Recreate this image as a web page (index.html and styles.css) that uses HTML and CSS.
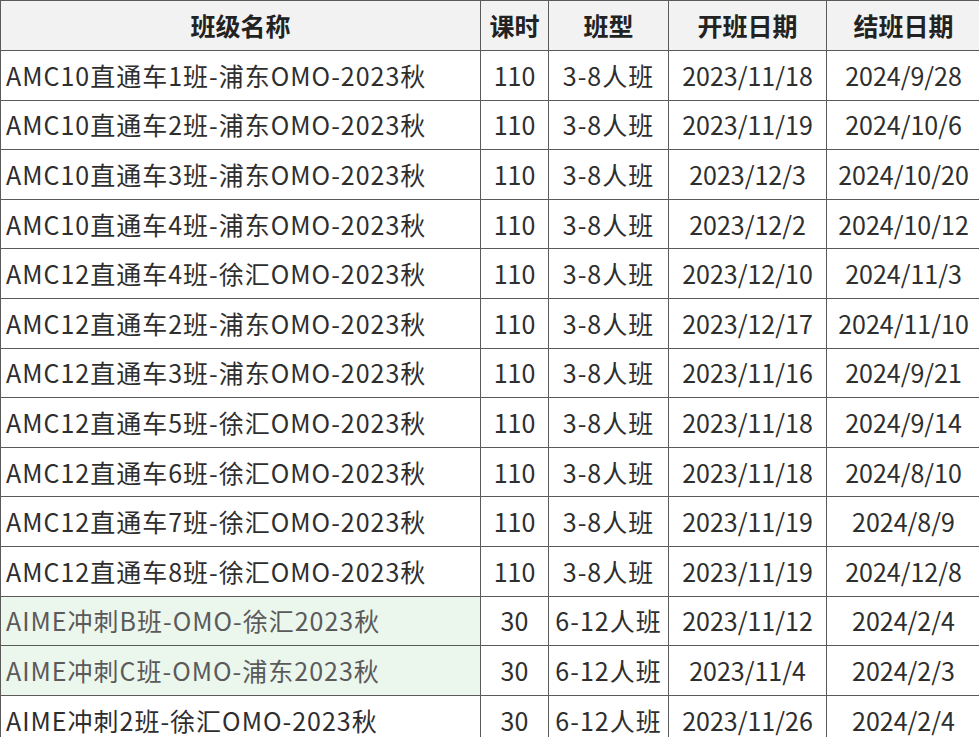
FILE: index.html
```html
<!DOCTYPE html>
<html lang="zh-CN">
<head>
<meta charset="utf-8">
<title>班级</title>
<link rel="stylesheet" href="styles.css">
</head>
<body>
<table class="grid">
  <colgroup>
    <col class="c-name"><col class="c-hours"><col class="c-type"><col class="c-start"><col class="c-end">
  </colgroup>
  <thead>
    <tr><th>班级名称</th><th>课时</th><th>班型</th><th>开班日期</th><th>结班日期</th></tr>
  </thead>
  <tbody>
    <tr><td class="name">AMC10直通车1班-浦东OMO-2023秋</td><td>110</td><td class="type">3-8人班</td><td>2023/11/18</td><td>2024/9/28</td></tr>
    <tr><td class="name">AMC10直通车2班-浦东OMO-2023秋</td><td>110</td><td class="type">3-8人班</td><td>2023/11/19</td><td>2024/10/6</td></tr>
    <tr><td class="name">AMC10直通车3班-浦东OMO-2023秋</td><td>110</td><td class="type">3-8人班</td><td>2023/12/3</td><td>2024/10/20</td></tr>
    <tr><td class="name">AMC10直通车4班-浦东OMO-2023秋</td><td>110</td><td class="type">3-8人班</td><td>2023/12/2</td><td>2024/10/12</td></tr>
    <tr><td class="name">AMC12直通车4班-徐汇OMO-2023秋</td><td>110</td><td class="type">3-8人班</td><td>2023/12/10</td><td>2024/11/3</td></tr>
    <tr><td class="name">AMC12直通车2班-浦东OMO-2023秋</td><td>110</td><td class="type">3-8人班</td><td>2023/12/17</td><td>2024/11/10</td></tr>
    <tr><td class="name">AMC12直通车3班-浦东OMO-2023秋</td><td>110</td><td class="type">3-8人班</td><td>2023/11/16</td><td>2024/9/21</td></tr>
    <tr><td class="name">AMC12直通车5班-徐汇OMO-2023秋</td><td>110</td><td class="type">3-8人班</td><td>2023/11/18</td><td>2024/9/14</td></tr>
    <tr><td class="name">AMC12直通车6班-徐汇OMO-2023秋</td><td>110</td><td class="type">3-8人班</td><td>2023/11/18</td><td>2024/8/10</td></tr>
    <tr><td class="name">AMC12直通车7班-徐汇OMO-2023秋</td><td>110</td><td class="type">3-8人班</td><td>2023/11/19</td><td>2024/8/9</td></tr>
    <tr><td class="name">AMC12直通车8班-徐汇OMO-2023秋</td><td>110</td><td class="type">3-8人班</td><td>2023/11/19</td><td>2024/12/8</td></tr>
    <tr><td class="name hl">AIME冲刺B班-OMO-徐汇2023秋</td><td>30</td><td class="type">6-12人班</td><td>2023/11/12</td><td>2024/2/4</td></tr>
    <tr><td class="name hl">AIME冲刺C班-OMO-浦东2023秋</td><td>30</td><td class="type">6-12人班</td><td>2023/11/4</td><td>2024/2/3</td></tr>
    <tr><td class="name">AIME冲刺2班-徐汇OMO-2023秋</td><td>30</td><td class="type">6-12人班</td><td>2023/11/26</td><td>2024/2/4</td></tr>
  </tbody>
</table>
</body>
</html>
```
FILE: styles.css
```css
html, body {
  margin: 0;
  padding: 0;
  background: #ffffff;
  overflow: hidden;
}
.grid {
  border-collapse: collapse;
  table-layout: fixed;
  width: 980px;
  font-family: "Noto Sans CJK SC", "Noto Sans", sans-serif;
  font-size: 25px;
  color: #2e2e2e;
}
.c-name { width: 480px; }
.c-hours { width: 68px; }
.c-type { width: 120px; }
.c-start { width: 158px; }
.c-end { width: 154px; }
.grid th, .grid td {
  border: 1px solid #5a5a5a;
  text-align: center;
  padding: 0;
  white-space: nowrap;
  overflow: hidden;
  line-height: 1;
}
.grid th {
  background: #f2f2f2;
  font-weight: bold;
  color: #222222;
  height: 49px;
}
.grid td {
  height: 48.6px;
}
.grid td.name {
  text-align: left;
  padding-left: 5px;
  letter-spacing: 1px;
}
.grid td.type {
  letter-spacing: 1px;
}
.grid td.hl {
  background: #ebf6ec;
  color: #5a5a5a;
}
```
